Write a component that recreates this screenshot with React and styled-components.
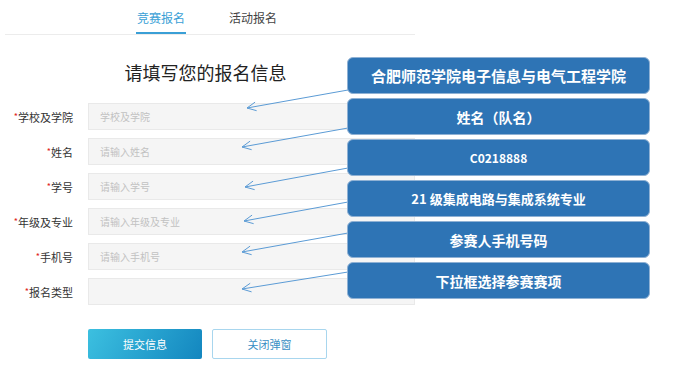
import styled, { createGlobalStyle } from 'styled-components';

const GlobalStyle = createGlobalStyle`
    html, body {
        margin: 0;
        padding: 0;
        background: #fff;
        font-family: "Noto Sans CJK SC", "Noto Sans", sans-serif;
    }
`

const Page = styled.div`
    position: relative;
    width: 684px;
    height: 366px;
    overflow: hidden;
    background: #fff;
`

const Panel = styled.div`
    margin-left: 5px;
    width: 410px;
`

const Tabs = styled.div`
    height: 34px;
    display: flex;
    justify-content: center;
    gap: 42px;
    border-bottom: 1px solid #ececec;
    padding-right: 6px;
`

const Tab = styled.div`
    height: 34px;
    box-sizing: border-box;
    width: 50px;
    display: flex;
    align-items: center;
    justify-content: center;
    font-size: 12px;
    color: ${p => p.$active ? '#3a9fd6' : '#444'};
    border-bottom: 2px solid ${p => p.$active ? '#3a9fd6' : 'transparent'};
    padding-top: 2px;
`

const Title = styled.h1`
    margin: 24px 0 0;
    font-size: 18px;
    font-weight: 400;
    color: #222;
    text-align: center;
    line-height: 26px;
    padding-right: 9px;
`

const Form = styled.div`
    margin-top: 18px;
    display: flex;
    flex-direction: column;
    gap: 8px;
`

const Row = styled.div`
    display: flex;
    align-items: center;
    gap: 15px;
`

const Label = styled.label`
    width: 68px;
    text-align: right;
    font-size: 11px;
    color: #333;
`

const Star = styled.span`
    color: #e02020;
    font-size: 9px;
    vertical-align: 2px;
`

const Field = styled.div`
    flex: 1;
    height: 27px;
    box-sizing: border-box;
    background: #f5f5f5;
    border: 1px solid #e9e9e9;
    display: flex;
    align-items: center;
    padding-left: 11px;
    font-size: 10px;
    color: #c2c2c2;
`

const Buttons = styled.div`
    display: flex;
    gap: 10px;
    margin: 24px 0 0 83px;
`

const SubmitButton = styled.button`
    width: 114px;
    height: 30px;
    border: none;
    border-radius: 2px;
    background: linear-gradient(120deg, #3cc0e0, #1386bf);
    color: #fff;
    font-family: inherit;
    font-size: 11px;
`

const CloseButton = styled.button`
    width: 115px;
    height: 30px;
    border: 1px solid #a8d6ee;
    border-radius: 2px;
    background: #fff;
    color: #3a8fc4;
    font-family: inherit;
    font-size: 11px;
`

const Callouts = styled.div`
    position: absolute;
    left: 347px;
    top: 57px;
    display: flex;
    flex-direction: column;
    gap: 4px;
`

const Callout = styled.div`
    width: 303px;
    height: 37px;
    box-sizing: border-box;
    background: #2e74b5;
    border: 1px solid #8fb1d4;
    border-radius: 6px;
    display: flex;
    align-items: center;
    justify-content: center;
    color: #fff;
    font-weight: 700;
    font-size: ${p => p.$size || 14}px;
`

const Arrows = styled.svg`
    position: absolute;
    left: 0;
    top: 0;
    pointer-events: none;
`

const fields = [
    { label: '学校及学院', placeholder: '学校及学院' },
    { label: '姓名', placeholder: '请输入姓名' },
    { label: '学号', placeholder: '请输入学号' },
    { label: '年级及专业', placeholder: '请输入年级及专业' },
    { label: '手机号', placeholder: '请输入手机号' },
    { label: '报名类型', placeholder: '' },
]

const notes = [
    { text: '合肥师范学院电子信息与电气工程学院', size: 15 },
    { text: '姓名（队名）', size: 14 },
    { text: 'C0218888', size: 12 },
    { text: '21 级集成电路与集成系统专业', size: 13 },
    { text: '参赛人手机号码', size: 14 },
    { text: '下拉框选择参赛赛项', size: 14 },
]

const lines = [
    [348, 90, 247, 108],
    [348, 128, 242, 147],
    [348, 168, 245, 187],
    [348, 202, 244, 221],
    [348, 233, 242, 252],
    [348, 272, 242, 289],
]

// open arrow head, two short strokes back from the tip
const head = ([x1, y1, x2, y2]) => {
    const a = Math.atan2(y1 - y2, x1 - x2);
    const len = 10, spread = 0.45;
    const p = s => `${x2 + len * Math.cos(a + s)},${y2 + len * Math.sin(a + s)}`;
    return `M${p(spread)} L${x2},${y2} L${p(-spread)}`;
}

export default function App() {
    return (
        <Page>
            <GlobalStyle />
            <Panel>
                <Tabs>
                    <Tab $active>竞赛报名</Tab>
                    <Tab>活动报名</Tab>
                </Tabs>
                <Title>请填写您的报名信息</Title>
                <Form>
                    {fields.map(f => (
                        <Row key={f.label}>
                            <Label><Star>*</Star>{f.label}</Label>
                            <Field>{f.placeholder}</Field>
                        </Row>
                    ))}
                </Form>
                <Buttons>
                    <SubmitButton>提交信息</SubmitButton>
                    <CloseButton>关闭弹窗</CloseButton>
                </Buttons>
            </Panel>
            <Arrows width="684" height="366">
                {lines.map((l, i) => (
                    <g key={i} stroke="#5b9bd5" strokeWidth="1" fill="none">
                        <line x1={l[0]} y1={l[1]} x2={l[2]} y2={l[3]} />
                        <path d={head(l)} />
                    </g>
                ))}
            </Arrows>
            <Callouts>
                {notes.map(n => (
                    <Callout key={n.text} $size={n.size}>{n.text}</Callout>
                ))}
            </Callouts>
        </Page>
    );
}
